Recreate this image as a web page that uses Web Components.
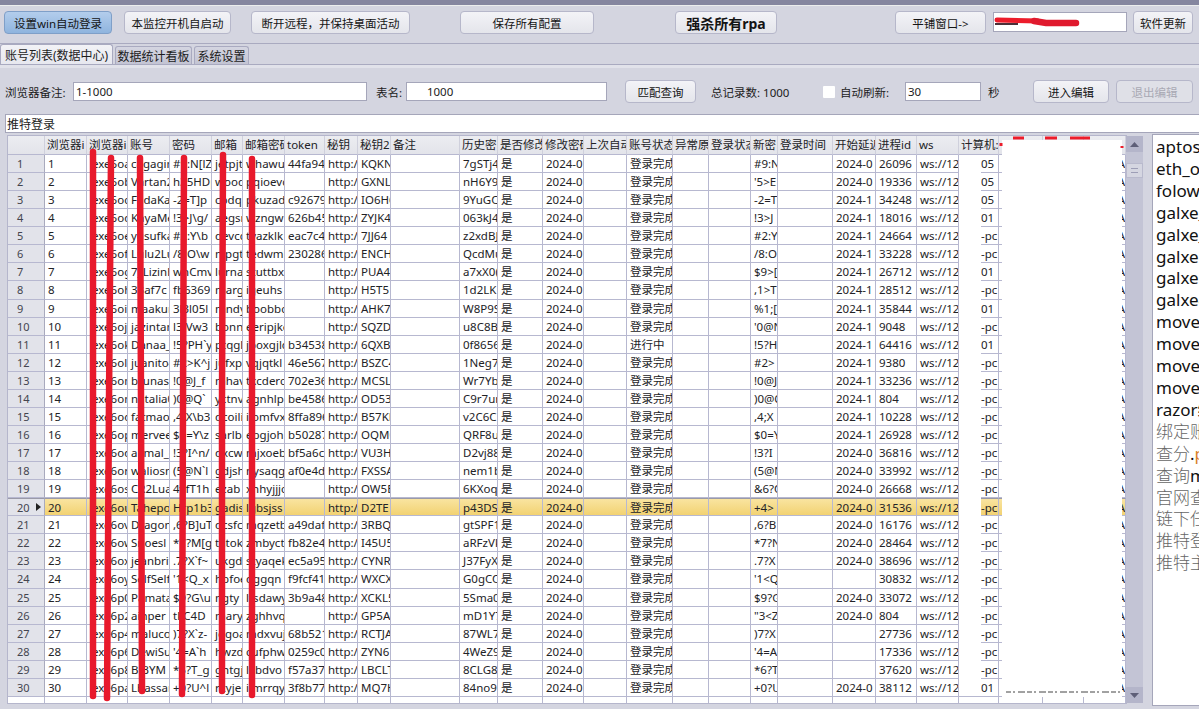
<!DOCTYPE html>
<html lang="zh">
<head>
<meta charset="utf-8">
<title>账号列表</title>
<style>
  html, body { margin: 0; height: 709px; overflow: hidden; }
  body {
    background: #d4d5e0;
    color: #1c1c1c;
    font: 11.5px "Noto Sans", "Noto Sans CJK SC", sans-serif;
    display: flex;
    flex-direction: column;
  }
  .row { display: flex; }
</style>
</head>
<body>
<top-bar>
  <ui-button active style="width:108px;margin-left:4px">设置win自动登录</ui-button>
  <ui-button style="width:107px;margin-left:12px">本监控开机自启动</ui-button>
  <ui-button style="width:159px;margin-left:20px">断开远程，并保持桌面活动</ui-button>
  <ui-button style="width:134px;margin-left:50px">保存所有配置</ui-button>
  <ui-button strong style="width:102px;margin-left:81px">强杀所有rpa</ui-button>
  <ui-button style="width:91px;margin-left:118px">平铺窗口-&gt;</ui-button>
  <ui-field scribble style="width:134px;margin:1px 0 0 7px;height:20px"></ui-field>
  <ui-button style="width:60px;margin-left:6px">软件更新</ui-button>
</top-bar>
<tab-strip></tab-strip>
<search-bar></search-bar>
<div class="row">
  <data-grid></data-grid>
  <grid-scrollbar></grid-scrollbar>
  <script-list></script-list>
</div>

<script>
class UiButton extends HTMLElement {
  constructor() {
    super();
    this.attachShadow({ mode: 'open' });
    this.shadowRoot.innerHTML = `
      <style>
        :host {
          display: flex;
          align-items: center;
          justify-content: center;
          box-sizing: border-box;
          height: 23px;
          flex: none;
          border: 1px solid #b6b7ca;
          border-radius: 4px;
          background: linear-gradient(#f3f3f7, #e4e5eb);
          color: #141414;
          font-size: 11.5px;
          white-space: nowrap;
        }
        :host([active]) {
          background: linear-gradient(#b3cdec, #8fb4de);
          border-color: #7f9fc8;
        }
        :host([strong]) { font-size: 14px; font-weight: 700; }
        :host([disabled]) { color: #a9a9b4; background: #dfe0e7; }
      </style>
      <slot></slot>`;
  }
}

class UiField extends HTMLElement {
  constructor() {
    super();
    this.attachShadow({ mode: 'open' });
    // the reference has this value scribbled over in red
    const scribble = this.hasAttribute('scribble') ? `
      <svg width="90" height="16" viewBox="0 0 90 16">
        <path d="M1 9H24" stroke="#4a3038" stroke-width="2" fill="none"/>
        <path d="M3 5L44 6" stroke="#ec1c2b" stroke-width="5" stroke-linecap="round" fill="none"/>
        <path d="M40 6L52 8L82 8" stroke="#e01a2e" stroke-width="6.5" stroke-linecap="round" fill="none"/>
      </svg>` : '';
    this.shadowRoot.innerHTML = `
      <style>
        :host {
          display: flex;
          align-items: center;
          box-sizing: border-box;
          height: 19px;
          flex: none;
          padding-left: 2px;
          background: #fff;
          border: 1px solid #a5a6ba;
          font-size: 11.5px;
          position: relative;
          white-space: pre;
        }
        svg { position: absolute; left: 0; top: 2px; }
      </style>
      <slot></slot>${scribble}`;
  }
}

class TopBar extends HTMLElement {
  constructor() {
    super();
    this.attachShadow({ mode: 'open' });
    this.shadowRoot.innerHTML = `
      <style>
        :host {
          display: flex;
          align-items: flex-start;
          box-sizing: border-box;
          flex: none;
          height: 44px;
          padding-top: 6px;
          border-top: 5px solid #85869f;
          border-bottom: 1px solid #a9aac0;
          box-shadow: inset 0 1px 0 #eceded;
        }
      </style>
      <slot></slot>`;
  }
}

class TabStrip extends HTMLElement {
  constructor() {
    super();
    this.attachShadow({ mode: 'open' });
    this.shadowRoot.innerHTML = `
      <style>
        :host {
          display: flex;
          align-items: flex-end;
          flex: none;
          box-sizing: border-box;
          height: 21px;
          gap: 2px;
          border-bottom: 1px solid #a9aac0;
          font-size: 12px;
        }
        div {
          box-sizing: border-box;
          height: 18px;
          padding: 0 4px;
          display: flex;
          align-items: center;
          justify-content: center;
          background: linear-gradient(#d4d5e1, #c3c4d3);
          border: 1px solid #a9aac0;
          border-bottom: 0;
          border-radius: 3px 3px 0 0;
          white-space: nowrap;
        }
        .on { height: 20px; width: 113px; background: linear-gradient(#f2f2f6, #e7e8ef); }
      </style>
      <div class="on">账号列表(数据中心)</div>
      <div style="width:77px">数据统计看板</div>
      <div style="width:55px">系统设置</div>`;
  }
}

class SearchBar extends HTMLElement {
  constructor() {
    super();
    this.attachShadow({ mode: 'open' });
    this.shadowRoot.innerHTML = `
      <style>
        :host {
          display: block;
          flex: none;
          box-sizing: border-box;
          height: 71px;
          padding: 12px 0 0 5px;
          border-top: 3px solid #e1e2ea;
          font-size: 11.5px;
        }
        .line { display: flex; align-items: center; height: 23px; white-space: nowrap; }
        .check { width: 12px; height: 12px; background: #fff; flex: none; margin: 0 5px 0 29px; border-radius: 1px; }
        .note {
          box-sizing: border-box;
          height: 19px;
          margin: 11px 0 0;
          padding-left: 1px;
          background: #fff;
          border: 1px solid #a5a6ba;
          border-right: 0;
          display: flex;
          align-items: center;
          font-size: 12px;
        }
      </style>
      <div class="line">
        <span style="width:68px">浏览器备注:</span>
        <ui-field style="width:294px">1-1000</ui-field>
        <span style="margin-left:9px;width:30px">表名:</span>
        <ui-field style="width:201px">      1000</ui-field>
        <ui-button style="width:71px;margin-left:18px">匹配查询</ui-button>
        <span style="margin-left:15px;width:83px">总记录数: 1000</span>
        <span class="check"></span>
        <span style="width:65px">自动刷新:</span>
        <ui-field style="width:76px">30</ui-field>
        <span style="margin-left:7px;width:45px">秒</span>
        <ui-button style="width:76px">进入编辑</ui-button>
        <ui-button disabled style="width:77px;margin-left:7px">退出编辑</ui-button>
      </div>
      <div class="note">推特登录</div>`;
  }
}

const EDGES = [45, 87, 128, 170, 212, 243, 285, 325, 358, 391, 460, 498, 543, 584, 627, 673, 709, 751, 778, 833, 876, 917, 959, 999, 1043, 1084, 1126];
const HEAD = ['浏览器i', '浏览器i', '账号', '密码', '邮箱', '邮箱密码', 'token', '秘钥', '秘钥2', '备注', '历史密', '是否修改', '修改密码', '上次自动', '账号状态', '异常原', '登录状态', '新密', '登录时间', '开始延迟', '进程id', 'ws', '计算机:', '', '', ''];
const SUFFIX = 'oa ob oc od oe of og oh oi oj ok ol om on oo op oq or os ou ov ow ox oy p0 p2 p4 p6 p8 pa'.split(' ');
const ACCOUNT = 'cagagim Vartan2 FadaKar KayaMe yusufka Lulu2Lu 7_Lizinh 33af7c maakun jazintan Danaa_ juanito4 brunasa natalia0 fatmaov mervee akmal_g waliosn CR2Lua Tahepo Dragon_ Snoesl jeanbrit SelfSelf Pamata ainper malucol DewiSu BiBYM Lhassar'.split(' ');
const PASS = '#9:N[lZ h35HDp -2=T]p !3>J\\g/ #2:Y\\b /8:O\\w wnCmv fb6369 3l3l05l l3:Vw3 !5?PH`y #2>K^j !0@J_f )0@Q` ,4;X\\b3 $0=Y\\z !3?I^n/ (5@N`l 4vfT1h Hrp1b3 ,6?B]uT *7?M[g .7?X`f~ \'1<Q_x $9?G\\u tkC4D )7?X`z- \'4=A`h *6?T_g +0?U^l'.split(' ');
const MAIL = 'jetpjt wood cbdq aegsr devcc nipgt lurnal margi mndy bonn ptqgl jufxp mhavt yctnv dcoili sarlba dxcw gdjsh ezab gadis dcsfc tatok ukgd hbfoe ngty maryp jdgoa hwzd gntgj rxyjei'.split(' ');
const MAILPW = 'whawu pqioevc pkuzad wzngw tvazklk tedwmk stuttbxr igeuhs boobbc eeripjke jpoxgjld vqjqtkl tkcderc agnhlpk iiomfvx ebgjoh mjxoeb nysaqg xnhyjjjc lgbsjss mqzetbp zmbyct styaqek dggqn ltsdawy zghhvq mdxvuj cufphw lxbdvo ilmrrqyt'.split(' ');
const TOKEN = '44fa94,,c92679,626b45,eac7c4,230286,,,,,b34538,46e567,702e36,be4586,8ffa896,b50287,bf5a6c,af0e4d,,,a49daf,fb82e4,ec5a95,f9fcf41,3b9a48,,68b521,0259c0,f57a37,3f8b77'.split(',');
const KEY2 = 'KQKN GXNL1 IO6H6 ZYJK4 7JJ64 ENCH PUA4 H5T5 AHK7 SQZD 6QXB BSZC4 MCSL4 OD53 B57KF OQM0 VU3H FXSSA OW5E D2TE 3RBQ I45U5 CYNR WXCX XCKL5 GP5A RCTJA ZYN6 LBCLT MQ7H'.split(' ');
const HIST = '7gSTj4 nH6Y9 9YuGC 063kJ4 z2xdBJ QcdMu a7xX0( 1d2LK W8P9S u8C8B 0f8656 1Neg7 Wr7Yb C9r7ur v2C6C QRF8u D2vj88 nem1b 6KXoq p43DS gtSPF1 aRFzVk J37FyX G0gCC 5Sma0 mD1Y7 87WL7 4WeZ9 8CLG8 84no9'.split(' ');
const NEWPW = '#9:N \'5>E -2=T !3>J #2:Y /8:O $9>[ ,1>T %1;[ \'0@N !5?H #2> !0@J )0@Q ,4;X $0=Y !3?I (5@N &6?C +4> ,6?B *7?N .7?X \'1<Q $9?G "3<Z )7?X \'4=A *6?T +0?U'.split(' ');
const PID = '26096 19336 34248 18016 24664 33228 26712 28512 35844 9048 64416 9380 33236 804 10228 26928 36816 33992 26668 31536 16176 28464 38696 30832 33072 804 27736 17336 37620 38112'.split(' ');
const HOST = ['05', '05', '05', '01', '-pc', '-pc', '01', '-pc', '01', '-pc', '01'];

function esc(s) {
  return String(s).replace(/&/g, '&amp;').replace(/</g, '&lt;').replace(/>/g, '&gt;');
}

function startOf(i) {
  if (i < 2) return '2024-0';
  if (i < 16) return '2024-1';
  if (i === 23 || (i >= 26 && i <= 28)) return '';
  return '2024-0';
}

function rowValues(i) {
  return [
    i + 1, 'exe6' + SUFFIX[i], ACCOUNT[i], PASS[i], MAIL[i], MAILPW[i], TOKEN[i], 'http://', KEY2[i], '',
    HIST[i], '是', '2024-0', '', i === 10 ? '进行中' : '登录完成', '', '', NEWPW[i], '', startOf(i),
    PID[i], 'ws://12', HOST[i] || (i === 29 ? '01' : '-pc'), '', '', 'A'
  ];
}

class DataGrid extends HTMLElement {
  constructor() {
    super();
    this.attachShadow({ mode: 'open' });
    const widths = EDGES.map((x, i) => (i ? x - EDGES[i - 1] : 37) + 'px').join(' ');
    let cells = '<div class="c h"></div>' + HEAD.map(t => `<div class="c h">${esc(t)}</div>`).join('');
    for (let i = 0; i < 30; i++) {
      const cur = i === 19 ? ' cur' : '';
      cells += `<div class="c r${cur}">${i + 1}${i === 19 ? '<i></i>' : ''}</div>`;
      rowValues(i).forEach((v, n) => {
        const extra = n === 1 ? ' exe' : n === 22 ? ' host' : n === 25 ? ' end' : '';
        cells += `<div class="c${cur}${extra}">${esc(v)}</div>`;
      });
    }
    for (let n = 0; n < 27; n++) cells += '<div class="c tail"></div>';

    this.shadowRoot.innerHTML = `
      <style>
        :host {
          display: block;
          position: relative;
          flex: none;
          box-sizing: border-box;
          width: 1118px;
          height: 567px;
          margin-left: 8px;
          background: #fff;
          outline: 1px solid #b5b6cc;
          overflow: hidden;
        }
        .grid {
          display: grid;
          grid-template-columns: ${widths};
          grid-template-rows: 19px repeat(30, 18.07px) 6px;
          font-size: 11.5px;
          color: #222226;
        }
        .c {
          box-sizing: border-box;
          border-right: 1px solid #b7b8d0;
          border-bottom: 1px solid #b7b8d0;
          padding-left: 3px;
          overflow: hidden;
          white-space: pre;
          line-height: 17px;
          position: relative;
        }
        .h {
          background: linear-gradient(#ecedf1, #e3e4ea);
          border-right-color: #cfd0dc;
          font-size: 11.5px;
          padding-left: 2px;
        }
        .r { background: #e2e3ea; padding-left: 9px; color: #44454f; border-right-color: #a9aabd; font-size: 11px; }
        .cur { background: linear-gradient(#f9e4a0, #f2d272); border-top: 1px solid #9a9aa8; }
        .r.cur { background: #e2e3ea; }
        .r i {
          position: absolute;
          left: 28px;
          top: 4px;
          border-left: 5px solid #222;
          border-top: 4px solid transparent;
          border-bottom: 4px solid transparent;
        }
        .exe { padding-left: 5px; }
        .host { padding-left: 22px; }
        .end { padding: 0; text-align: right; }
        .tail { border-bottom: 0; }
        svg { position: absolute; inset: 0; }
      </style>
      <div class="grid">${cells}</div>
      <svg width="1118" height="567" viewBox="8 136 1118 567">
        <rect x="959" y="156" width="22" height="540" fill="#fff"/>
        <rect x="1002" y="140" width="120" height="557" fill="#fff"/>
        <path d="M1013 138h11M1045 138h12M1070 138h20M1001 143v3M1122 146v2" stroke="#ec1c2b" stroke-width="3" fill="none"/>
        <path d="M1006 692H1122" stroke="#444" stroke-width="1" stroke-dasharray="5 2 2 3 7 2" fill="none"/>
        <g fill="none" stroke="#e8192c" stroke-width="6.5" stroke-linecap="round">
          <path d="M93 152V696"/>
          <path d="M111 158L109 400L107 698"/>
          <path d="M140 158L141 400L142 691"/>
          <path d="M184 158L183 400L182 694"/>
          <path d="M223 155L222 400L222 691"/>
          <path d="M252 159L252 400L252 695"/>
        </g>
      </svg>`;
  }
}

class GridScrollbar extends HTMLElement {
  constructor() {
    super();
    this.attachShadow({ mode: 'open' });
    this.shadowRoot.innerHTML = `
      <style>
        :host {
          display: flex;
          flex-direction: column;
          flex: none;
          width: 17px;
          height: 567px;
          background: #c3c4d5;
          position: relative;
        }
        .btn {
          height: 16px;
          background: #b4b5ca;
          display: flex;
          align-items: center;
          justify-content: center;
          flex: none;
        }
        .thumb {
          margin-top: 11px;
          height: 15px;
          background: #d5d6e1;
          border: 1px solid #b9bacd;
          box-sizing: border-box;
          display: flex;
          align-items: center;
          justify-content: center;
        }
        .thumb b { width: 7px; height: 3px; border-top: 1px solid #9d9eb6; border-bottom: 1px solid #9d9eb6; }
        .fill { flex: 1; }
      </style>
      <div class="btn"><svg width="9" height="5"><path d="M0 5L4.5 0L9 5Z" fill="#5e5f78"/></svg></div>
      <div class="thumb"><b></b></div>
      <div class="fill"></div>
      <div class="btn"><svg width="9" height="5"><path d="M0 0L4.5 5L9 0Z" fill="#5e5f78"/></svg></div>`;
  }
}

const SCRIPTS = ['aptos_', 'eth_o', 'folow<b>.</b>', 'galxe_', 'galxe_', 'galxe<b>2</b>', 'galxe<b>3</b>', 'galxe<b>4</b>', 'move', 'move', 'move', 'move', 'razor绑', '<u>绑定账</u>', '<u>查分</u>.<b>p</b>', '<u>查询</u>m', '<u>官网查</u>', '<u>链下任</u>', '<u>推特登</u>', '<u>推特主</u>'];

class ScriptList extends HTMLElement {
  constructor() {
    super();
    this.attachShadow({ mode: 'open' });
    this.shadowRoot.innerHTML = `
      <style>
        :host {
          display: block;
          box-sizing: border-box;
          flex: none;
          width: 47px;
          height: 572px;
          margin: -2px 0 0 9px;
          padding: 1px 0 0 3px;
          background: #fff;
          border: 1px solid #a5a6ba;
          border-right: 0;
          overflow: hidden;
          font-size: 17px;
          line-height: 21.9px;
          color: #111;
          white-space: nowrap;
        }
        b { color: #d9822b; font-weight: 400; }
        u { color: #666; text-decoration: none; font-weight: 300; }
      </style>
      ${SCRIPTS.map(s => `<div>${s}</div>`).join('')}`;
  }
}

customElements.define('ui-button', UiButton);
customElements.define('ui-field', UiField);
customElements.define('top-bar', TopBar);
customElements.define('tab-strip', TabStrip);
customElements.define('search-bar', SearchBar);
customElements.define('data-grid', DataGrid);
customElements.define('grid-scrollbar', GridScrollbar);
customElements.define('script-list', ScriptList);
</script>
</body>
</html>
